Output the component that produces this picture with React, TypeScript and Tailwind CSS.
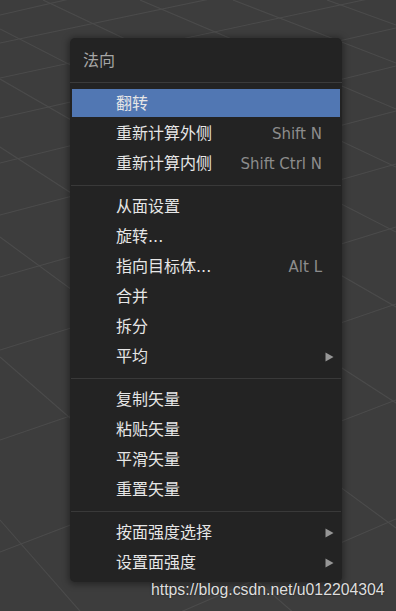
import React from "react";

type Item = { label: string; shortcut?: string; sub?: boolean; active?: boolean };

const groups: Item[][] = [
  [
    { label: "翻转", active: true },
    { label: "重新计算外侧", shortcut: "Shift N" },
    { label: "重新计算内侧", shortcut: "Shift Ctrl N" },
  ],
  [
    { label: "从面设置" },
    { label: "旋转..." },
    { label: "指向目标体...", shortcut: "Alt L" },
    { label: "合并" },
    { label: "拆分" },
    { label: "平均", sub: true },
  ],
  [
    { label: "复制矢量" },
    { label: "粘贴矢量" },
    { label: "平滑矢量" },
    { label: "重置矢量" },
  ],
  [
    { label: "按面强度选择", sub: true },
    { label: "设置面强度", sub: true },
  ],
];

const rising: [number, number][] = [
  [15, -76],
  [43, -40],
  [78, -7],
  [118, 28],
  [163, 66],
  [215, 111],
  [277, 164],
  [350, 227],
  [440, 304],
  [552, 400],
  [690, 519],
];

const falling: [number, number, number, number][] = [
  [0, 29, 396, 232],
  [0, 79, 396, 307],
  [0, 147, 396, 403],
  [0, 237, 396, 528],
  [0, 357, 396, 702],
  [0, 520, 396, 971],
  [43, 0, 396, 167],
  [140, 0, 396, 109],
  [233, 0, 396, 63],
  [327, 0, 396, 25],
];

function Grid() {
  return (
    <svg className="absolute inset-0" width={396} height={611} viewBox="0 0 396 611">
      {rising.map(([a, b], i) => (
        <line key={"r" + i} x1={0} y1={a} x2={396} y2={b} stroke="#4b4b4b" strokeWidth={1.1} />
      ))}
      {falling.map(([x1, y1, x2, y2], i) => (
        <line key={"f" + i} x1={x1} y1={y1} x2={x2} y2={y2} stroke="#4b4b4b" strokeWidth={1.1} />
      ))}
    </svg>
  );
}

function Row({ item }: { item: Item }) {
  return (
    <div className="h-[30px] px-[2px] py-[1px]">
      <div
        className={
          "flex h-full items-center pl-[44px] pr-[6px] pt-[2px] " + (item.active ? "bg-[#5177b3]" : "")
        }
      >
        <span className="flex-1 text-[16px] leading-none text-[#e6e6e6]">{item.label}</span>
        {item.shortcut && (
          <span className="pr-[12px] text-[15px] leading-none text-[#8c8c8c]">{item.shortcut}</span>
        )}
        {item.sub && (
          <svg width="9" height="10" viewBox="0 0 9 10">
            <path d="M0.5 0.5 L8.5 5 L0.5 9.5 Z" fill="#969696" />
          </svg>
        )}
      </div>
    </div>
  );
}

function Sep() {
  return (
    <div className="px-[1px] pt-[7px] pb-[5px]">
      <div className="h-px bg-[#393939]" />
    </div>
  );
}

export default function App() {
  return (
    <div
      className="relative h-[611px] w-[396px] overflow-hidden bg-[#3d3d3d]"
      style={{ fontFamily: '"DejaVu Sans", "Noto Sans CJK SC", sans-serif' }}
    >
      <Grid />
      <div className="relative pl-[70px] pt-[38px]">
        <div className="w-[272px] rounded-[5px] bg-[#232323] pb-[5px] shadow-[0_1px_6px_2px_rgba(0,0,0,0.35)]">
          <div className="flex h-[44px] items-center pl-[13px] pt-[2px] text-[16px] leading-none text-[#a6a6a6]">
            法向
          </div>
          <div className="h-px bg-[#3b3b3b]" />
          <div className="h-[5px]" />
          {groups.map((g, gi) => (
            <React.Fragment key={gi}>
              {gi > 0 && <Sep />}
              {g.map((it, ii) => (
                <Row key={ii} item={it} />
              ))}
            </React.Fragment>
          ))}
        </div>
      </div>
      <div
        className="absolute left-[151px] top-[582px] text-[15.8px] leading-none text-[#dedede]"
        style={{
          fontFamily: '"Liberation Sans", Arial, sans-serif',
          textShadow: "0 0 2px rgba(0,0,0,0.6)",
        }}
      >
        https://blog.csdn.net/u012204304
      </div>
    </div>
  );
}
